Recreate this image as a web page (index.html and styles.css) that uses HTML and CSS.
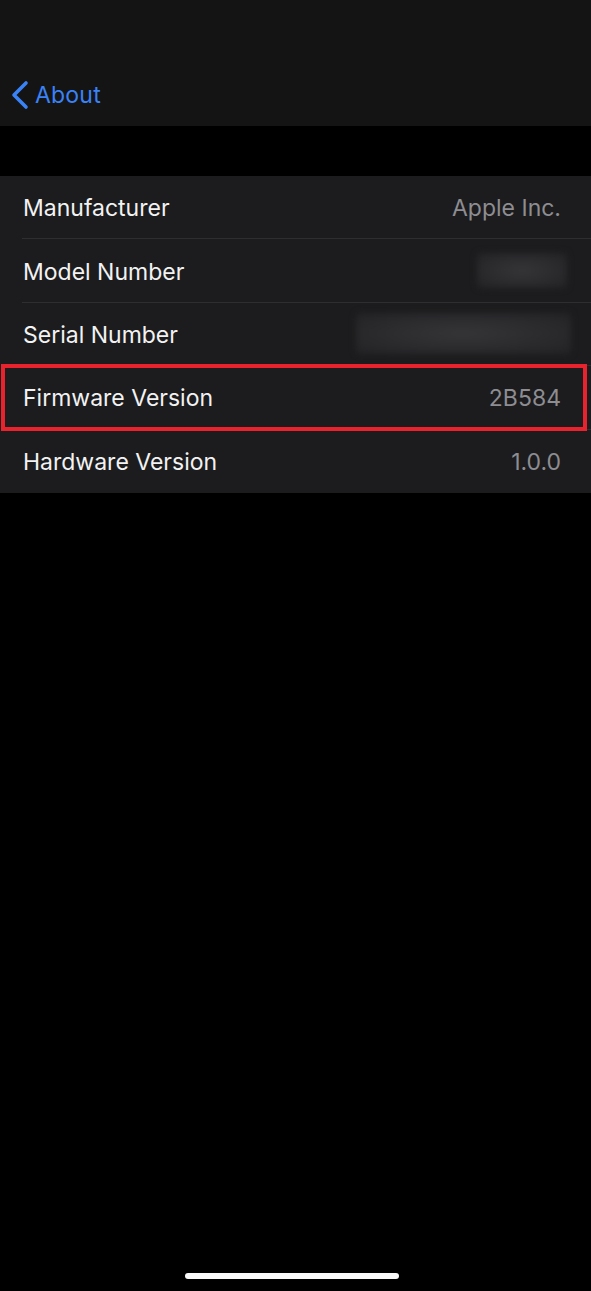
FILE: index.html
```html
<!DOCTYPE html>
<html>
<head>
<meta charset="utf-8">
<link rel="stylesheet" href="styles.css">
</head>
<body>
<div class="screen">
  <header class="nav">
    <a class="back">
      <svg class="chev" width="20" height="30" viewBox="0 0 20 30"><path d="M16 3 L4 15 L16 27" fill="none" stroke="#3a82f7" stroke-width="3.6" stroke-linecap="round" stroke-linejoin="round"/></svg>
      <span class="back-label">About</span>
    </a>
  </header>
  <div class="gap"></div>
  <section class="group">
    <div class="row"><span class="label">Manufacturer</span><span class="value">Apple Inc.</span></div>
    <div class="row"><span class="label">Model Number</span><span class="blur blur-model"></span></div>
    <div class="row"><span class="label">Serial Number</span><span class="blur blur-serial"></span></div>
    <div class="row highlighted"><span class="label">Firmware Version</span><span class="value">2B584</span><span class="redbox"></span></div>
    <div class="row last"><span class="label">Hardware Version</span><span class="value">1.0.0</span></div>
  </section>
  <div class="home"></div>
</div>
</body>
</html>
```
FILE: styles.css
```css
html, body {
  margin: 0;
  padding: 0;
  background: #000;
}
.screen {
  width: 591px;
  height: 1291px;
  background: #000;
  display: flex;
  flex-direction: column;
  font-family: Inter, "Noto Sans", sans-serif;
  overflow: hidden;
}
.nav {
  height: 126px;
  background: #141414;
  display: flex;
  align-items: flex-end;
  box-sizing: border-box;
  padding: 0 0 16px 10px;
}
.back {
  display: flex;
  align-items: center;
  gap: 5px;
  color: #3a82f7;
}
.chev { display: block; }
.back-label {
  font-size: 23px;
  letter-spacing: 0.2px;
  line-height: 30px;
}
.gap { height: 50px; }
.group {
  background: #1c1c1e;
  padding-left: 22px;
}
.row {
  position: relative;
  height: 63.4px;
  display: flex;
  align-items: center;
  justify-content: space-between;
  padding-right: 30px;
  padding-top: 2px;
  border-bottom: 1px solid #2e2e31;
  box-sizing: border-box;
}
.row.last { border-bottom: none; }
.label {
  color: #f2f2f2;
  font-size: 23px;
  padding-left: 1px;
}
.value {
  color: #8d8d92;
  font-size: 23px;
}
.blur {
  display: block;
  border-radius: 4px;
  background: radial-gradient(ellipse at center, #353538 0%, #2a2a2d 60%, #232326 100%);
  filter: blur(3px);
}
.blur-model { width: 90px; height: 35px; margin-right: -6px; margin-top: -2px; }
.blur-serial { width: 215px; height: 41px; margin-right: -10px; margin-top: -2px; }
.redbox {
  position: absolute;
  left: -21px;
  right: 4px;
  top: -2px;
  bottom: -2px;
  border: 4px solid #e8232d;
  box-sizing: border-box;
}
.home {
  margin: auto 0 12px 185px;
  width: 214px;
  height: 6px;
  border-radius: 3px;
  background: #fafafa;
}
```
